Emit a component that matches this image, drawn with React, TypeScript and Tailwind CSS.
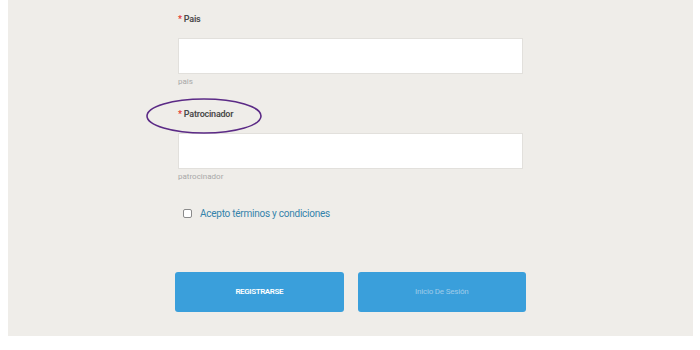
const Field = ({ label, hint }: { label: string; hint: string }) => (
  <div>
    <label className="flex items-center h-[12px] text-[9px] font-semibold text-[#4a4a4a] tracking-tight">
      <span className="text-[#e53935] mr-[2px]">*</span>
      {label}
    </label>
    <input
      type="text"
      className="mt-[12px] block w-full h-[36px] bg-white border border-[#e2e0dc] outline-none"
    />
    <p className="mt-[3px] h-[10px] text-[8px] leading-[10px] text-[#a8a8a8]">{hint}</p>
  </div>
);

export default function App() {
  return (
    <div className="w-[700px] h-[350px] bg-white font-['Roboto',sans-serif]">
      <div className="ml-[8px] w-[685px] h-[336px] bg-[#efede9] pt-[14px]">
        <div className="relative w-[345px] mx-auto">
          <Field label="Pais" hint="pais" />
          <div className="mt-[22px]">
            <Field label="Patrocinador" hint="patrocinador" />
          </div>

          <svg
            className="absolute left-[-33px] top-[83px] pointer-events-none"
            width="120"
            height="40"
            viewBox="0 0 120 40"
          >
            <ellipse cx="59" cy="19" rx="57" ry="17" fill="none" stroke="#5b2a86" strokeWidth="1.6" />
          </svg>

          <label className="mt-[24px] ml-[5px] flex items-center gap-[8px] text-[10px] text-[#3583ab] tracking-tight">
            <span className="w-[9px] h-[9px] rounded-[2px] border border-[#8a8a8a] bg-white" />
            Acepto términos y condiciones
          </label>

          <div className="mt-[51px] -mx-[3px] flex gap-[14px]">
            <button className="flex-1 h-[40px] rounded-[3px] bg-[#3a9fdb] text-white text-[8px] font-semibold tracking-tighter">
              REGISTRARSE
            </button>
            <button className="flex-1 h-[40px] rounded-[3px] bg-[#3a9fdb] text-[#9fcbe9] text-[8px] tracking-tight">
              Inicio De Sesión
            </button>
          </div>
        </div>
      </div>
    </div>
  );
}
